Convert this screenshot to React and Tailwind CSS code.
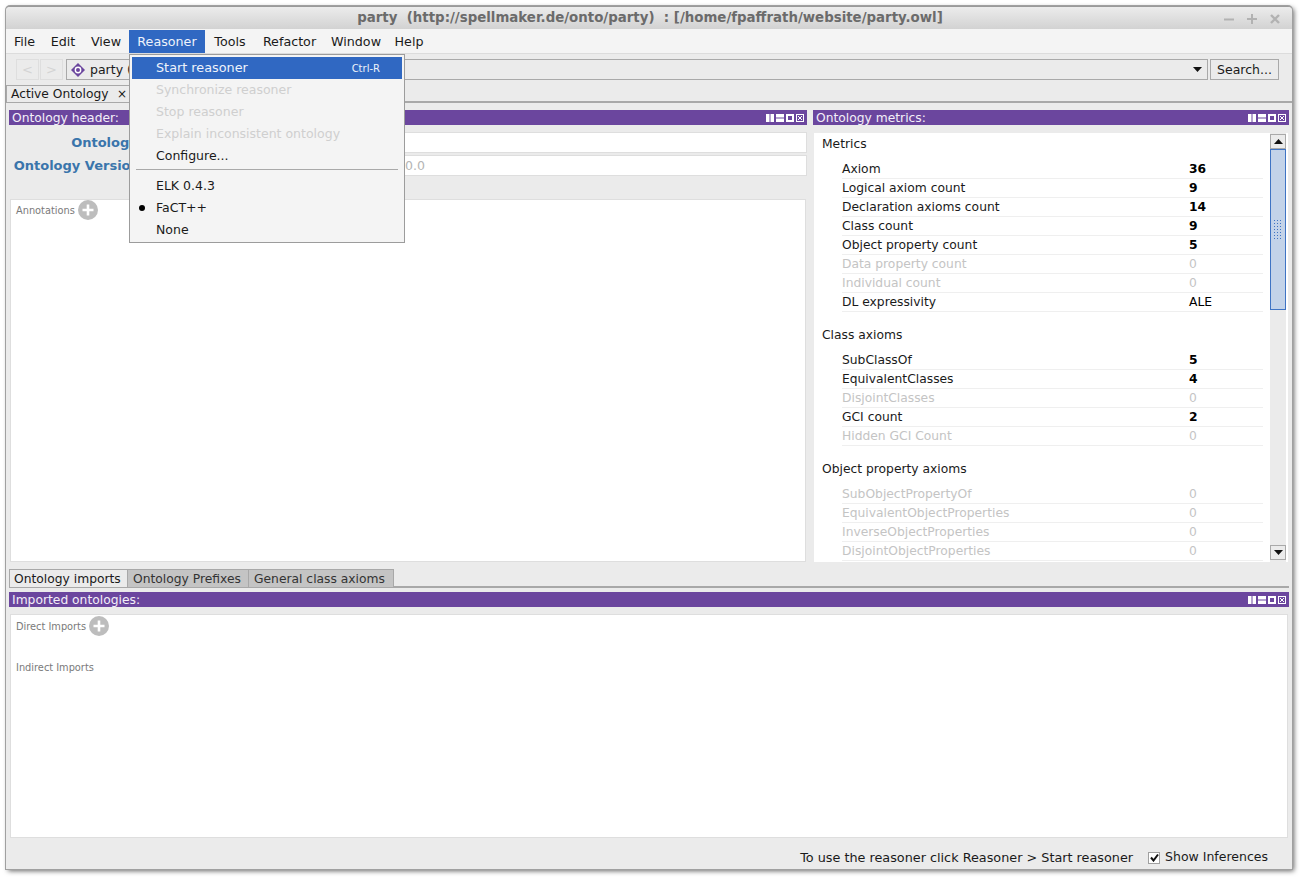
function ViewIcons() {
  return (
    <div className="flex items-center gap-[2px] mr-[3px]">
      <svg width="8" height="8" viewBox="0 0 8 8"><rect x="0" y="0" width="3.5" height="8" fill="#fff" /><rect x="4.5" y="0" width="3.5" height="8" fill="#fff" /></svg>
      <svg width="8" height="8" viewBox="0 0 8 8"><rect x="0" y="0" width="8" height="3.5" fill="#fff" /><rect x="0" y="4.5" width="8" height="3.5" fill="#fff" /></svg>
      <svg width="8" height="8" viewBox="0 0 8 8"><rect x="0" y="0" width="8" height="8" fill="#fff" /><rect x="2" y="2" width="4" height="4" fill="#6b469e" /></svg>
      <svg width="8" height="8" viewBox="0 0 8 8"><rect x="0.5" y="0.5" width="7" height="7" fill="none" stroke="#fff" /><path d="M2 2l4 4M6 2l-4 4" stroke="#fff" /></svg>
    </div>
  );
}
function PanelHeader({ title }) {
  return (
    <div className="h-[15px] bg-[#6b469e] text-[#f3eff8] flex items-center justify-between pl-[3px] text-[12.3px] leading-[15px]">
      <span className="mt-[1px]">{title}</span>
      <ViewIcons />
    </div>
  );
}
function Plus() {
  return (
    <svg width="20" height="20" viewBox="0 0 20 20">
      <circle cx="10" cy="10" r="10" fill="#bdbdbd" />
      <path d="M10 4.5v11M4.5 10h11" stroke="#fff" strokeWidth="2.6" />
    </svg>
  );
}
function MetricRow({ label, value, dim, plain }) {
  return (
    <div className="h-[19px] ml-[28px] mr-[7px] border-b border-[#efefef] flex items-center leading-[18px]">
      <span className={`w-[347px] ${dim ? "text-[#c4c4c4]" : "text-[#1a1a1a]"}`}>{label}</span>
      <span className={dim ? "text-[#c4c4c4]" : plain ? "text-black" : "font-bold text-black"}>{value}</span>
    </div>
  );
}
function MetricGroup({ title, rows }) {
  return (
    <div className="mb-[13px]">
      <div className="h-[19px] pl-[8px] leading-[21px] text-[#1a1a1a] mb-[7px]">{title}</div>
      {rows.map((r) => <MetricRow key={r.label} {...r} />)}
    </div>
  );
}
function MenuItem({ children, active, disabled, shortcut, dot }) {
  return (
    <div className={`h-[22px] flex items-center relative pl-[24px] pr-[22px] justify-between ${active ? "bg-[#3068c2] text-[#eef3fb]" : disabled ? "text-[#cfcfcf]" : "text-[#1a1a1a]"}`}>
      {dot && <span className="absolute left-[7px] top-[8px] w-[6px] h-[6px] rounded-full bg-black" />}
      <span className={active ? "text-[12.8px]" : ""}>{children}</span>
      {shortcut && <span className="text-[10px]">{shortcut}</span>}
    </div>
  );
}

export default function App() {
  return (
    <div className="w-[1302px] h-[879px] bg-white pl-[6px] pt-[6px] overflow-hidden text-[12.3px]" style={{ fontFamily: '"DejaVu Sans", sans-serif' }}>
      <div className="relative w-[1286px] h-[863px] bg-[#ebebeb] rounded-t-[4px] border-t border-[#9a9a9a] flex flex-col shadow-[0_0_0_1px_#a0a0a0,2px_2px_5px_rgba(0,0,0,0.6)]">
        {/* title */}
        <div className="h-[22px] shrink-0 rounded-t-[4px] bg-gradient-to-b from-[#ececec] to-[#d2d2d2] relative flex items-center justify-center font-bold text-[#6b6b6b] text-[13.35px] whitespace-pre pl-[2px]">
          party  (http://spellmaker.de/onto/party)  : [/home/fpaffrath/website/party.owl]
          <div className="absolute right-[12px] top-[5px] flex gap-[13px]">
            <svg width="10" height="12" viewBox="0 0 10 12"><path d="M0 7.5h10" stroke="#b2b2b2" strokeWidth="2" /></svg>
            <svg width="10" height="12" viewBox="0 0 10 12"><path d="M0 7h10M5 2v10" stroke="#b2b2b2" strokeWidth="2" /></svg>
            <svg width="10" height="12" viewBox="0 0 10 12"><path d="M1 3l8 8M9 3l-8 8" stroke="#b2b2b2" strokeWidth="2.4" /></svg>
          </div>
        </div>
        {/* menu bar */}
        <div className="h-[25px] shrink-0 bg-[#f4f4f4] border-b border-[#dcdcdc] flex pt-[1px] text-[#1a1a1a] text-[12.7px] leading-[23px] text-center">
          <span className="w-[37px]">File</span>
          <span className="w-[40px]">Edit</span>
          <span className="w-[46px]">View</span>
          <span className="w-[76px] bg-[#3068c2] text-[#eef3fb]">Reasoner</span>
          <span className="w-[50px]">Tools</span>
          <span className="w-[69px]">Refactor</span>
          <span className="w-[64px]">Window</span>
          <span className="w-[42px]">Help</span>
        </div>
        {/* toolbar */}
        <div className="h-[31px] shrink-0 flex items-center pl-[10px] pr-[13px]">
          <button className="w-[23px] h-[21px] border border-[#dedede] text-[#d4d4d4] text-[13px] leading-none">&lt;</button>
          <button className="w-[23px] h-[21px] ml-[1px] border border-[#dedede] text-[#d4d4d4] text-[13px] leading-none">&gt;</button>
          <div className="flex-1 h-[21px] ml-[3px] border border-[#a9a9a9] flex items-center pl-[4px] pr-[5px] justify-between">
            <div className="flex items-center gap-[5px]">
              <svg width="14" height="14" viewBox="0 0 14 14"><path d="M7 0L14 7 7 14 0 7z" fill="#6b469e" /><circle cx="7" cy="7" r="3.4" fill="#fff" /><circle cx="7" cy="7" r="2" fill="#6b469e" /></svg>
              <span className="text-[#1a1a1a] text-[12.5px] mt-[1px]">party (</span>
            </div>
            <svg width="9" height="5" viewBox="0 0 9 5"><path d="M0 0h9L4.5 5z" fill="#111" /></svg>
          </div>
          <button className="w-[69px] h-[21px] ml-[2px] pt-[1px] border border-[#a9a9a9] text-[#1a1a1a] text-[12.5px] leading-none">Search...</button>
        </div>
        {/* tab */}
        <div className="h-[18px] shrink-0 border-b-2 border-[#a8a8a8] flex">
          <div className="w-[125px] h-[17px] bg-[#ebebeb] border-l border-t border-[#a8a8a8] flex items-center justify-between pl-[4px] pr-[4px] text-[#1a1a1a] text-[12.25px]">
            <span>Active Ontology</span>
            <span className="text-[12px]">×</span>
          </div>
        </div>
        {/* main */}
        <div className="flex-1 flex flex-col px-[3px] pt-[7px] min-h-0">
          <div className="h-[452px] flex gap-[6px] shrink-0">
            <div className="w-[798px] flex flex-col">
              <PanelHeader title="Ontology header:" />
              <div className="mt-[7px] flex flex-col gap-[2px] font-bold text-[#3a75ab] text-[13px]">
                {["Ontology IRI", "Ontology Version IRI"].map((l, i) => (
                  <div key={l} className="flex h-[21px] items-center">
                    <div className={`w-[155px] text-right whitespace-nowrap leading-[21px] ${i === 0 ? "pr-[2px]" : ""}`}>{l}</div>
                    <div className="flex-1 ml-[6px] h-[21px] bg-white border border-[#dedede] font-normal text-[#b5b5b5] pl-[234px] text-[12.5px] leading-[19px]">{i === 1 ? "0.0" : ""}</div>
                  </div>
                ))}
              </div>
              <div className="mt-[23px] mx-[1px] flex-1 bg-white border border-[#dedede] pl-[5px]">
                <div className="flex items-center h-[20px] text-[9.8px] text-[#7a7a7a] gap-[3px]"><span className="mt-[3px]">Annotations</span><Plus /></div>
              </div>
            </div>
            <div className="flex-1 flex flex-col min-w-0">
              <PanelHeader title="Ontology metrics:" />
              <div className="mt-[8px] mx-[1px] h-[429px] bg-white flex relative overflow-hidden">
                <div className="flex-1 pt-[1px] overflow-hidden">
                  <MetricGroup title="Metrics" rows={[
                    { label: "Axiom", value: "36" },
                    { label: "Logical axiom count", value: "9" },
                    { label: "Declaration axioms count", value: "14" },
                    { label: "Class count", value: "9" },
                    { label: "Object property count", value: "5" },
                    { label: "Data property count", value: "0", dim: true },
                    { label: "Individual count", value: "0", dim: true },
                    { label: "DL expressivity", value: "ALE", plain: true },
                  ]} />
                  <MetricGroup title="Class axioms" rows={[
                    { label: "SubClassOf", value: "5" },
                    { label: "EquivalentClasses", value: "4" },
                    { label: "DisjointClasses", value: "0", dim: true },
                    { label: "GCI count", value: "2" },
                    { label: "Hidden GCI Count", value: "0", dim: true },
                  ]} />
                  <MetricGroup title="Object property axioms" rows={[
                    { label: "SubObjectPropertyOf", value: "0", dim: true },
                    { label: "EquivalentObjectProperties", value: "0", dim: true },
                    { label: "InverseObjectProperties", value: "0", dim: true },
                    { label: "DisjointObjectProperties", value: "0", dim: true },
                  ]} />
                </div>
                <div className="w-[16px] mr-[2px] pt-[1px] pb-[2px] shrink-0 flex flex-col bg-[#ebebeb]">
                  <div className="h-[15px] shrink-0 border border-[#a9a9a9] flex items-center justify-center"><svg width="9" height="5" viewBox="0 0 9 5"><path d="M0 5h9L4.5 0z" fill="#111" /></svg></div>
                  <div className="h-[161px] shrink-0 bg-[#c3d3e9] border border-[#3f74c4] flex items-center justify-center">
                    <div className="w-[10px] h-[22px] bg-[radial-gradient(#3f74c4_1px,transparent_1px)] bg-[length:3px_3px]" />
                  </div>
                  <div className="flex-1" />
                  <div className="h-[15px] shrink-0 border border-[#a9a9a9] flex items-center justify-center"><svg width="9" height="5" viewBox="0 0 9 5"><path d="M0 0h9L4.5 5z" fill="#111" /></svg></div>
                </div>
              </div>
            </div>
          </div>
          {/* bottom tabs */}
          <div className="h-[19px] mt-[7px] shrink-0 border-b-2 border-[#a8a8a8] flex items-start whitespace-nowrap">
            <div className="h-[18px] pl-[4px] w-[119px] border border-[#a8a8a8] border-b-0 text-[#1a1a1a] leading-[18px] bg-[#ebebeb]">Ontology imports</div>
            <div className="h-[18px] pl-[5px] w-[121px] border-t border-r border-[#a8a8a8] bg-[#c4c4c4] text-[#333] leading-[18px]">Ontology Prefixes</div>
            <div className="h-[18px] pl-[5px] w-[145px] border-t border-r border-[#a8a8a8] bg-[#c4c4c4] text-[#333] leading-[18px]">General class axioms</div>
          </div>
          <div className="mt-[4px] shrink-0"><PanelHeader title="Imported ontologies:" /></div>
          <div className="mt-[7px] mx-[1px] h-[224px] shrink-0 bg-white border border-[#dedede] pl-[5px] pt-[1px] text-[9.8px] text-[#7a7a7a]">
            <div className="flex items-center h-[20px] gap-[3px]"><span className="mt-[3px]">Direct Imports</span><Plus /></div>
            <div className="mt-[25px] leading-[14px]">Indirect Imports</div>
          </div>
          <div className="flex-1 flex items-center justify-end pr-[21px] pt-[8px] text-[#1a1a1a] text-[12.5px]">
            <span className="text-[12.8px]">To use the reasoner click Reasoner &gt; Start reasoner</span>
            <span className="ml-[15px] w-[12px] h-[12px] border border-[#a0a0a0] bg-white flex items-center justify-center">
              <svg width="9" height="9" viewBox="0 0 9 9"><path d="M1 4.5l2.5 3L8 1.5" fill="none" stroke="#111" strokeWidth="2" /></svg>
            </span>
            <span className="ml-[5px]">Show Inferences</span>
          </div>
        </div>
        {/* reasoner menu */}
        <div className="absolute left-[123px] top-[47px] w-[276px] h-[189px] bg-[#f4f4f4] border border-[#9c9c9c] p-[2px] text-[12.5px]">
          <MenuItem active shortcut="Ctrl-R">Start reasoner</MenuItem>
          <MenuItem disabled>Synchronize reasoner</MenuItem>
          <MenuItem disabled>Stop reasoner</MenuItem>
          <MenuItem disabled>Explain inconsistent ontology</MenuItem>
          <MenuItem>Configure...</MenuItem>
          <div className="h-[8px] pt-[2px] px-[4px]"><div className="h-px w-full bg-[#a9a9a9]" /></div>
          <MenuItem>ELK 0.4.3</MenuItem>
          <MenuItem dot>FaCT++</MenuItem>
          <MenuItem>None</MenuItem>
        </div>
      </div>
    </div>
  );
}
